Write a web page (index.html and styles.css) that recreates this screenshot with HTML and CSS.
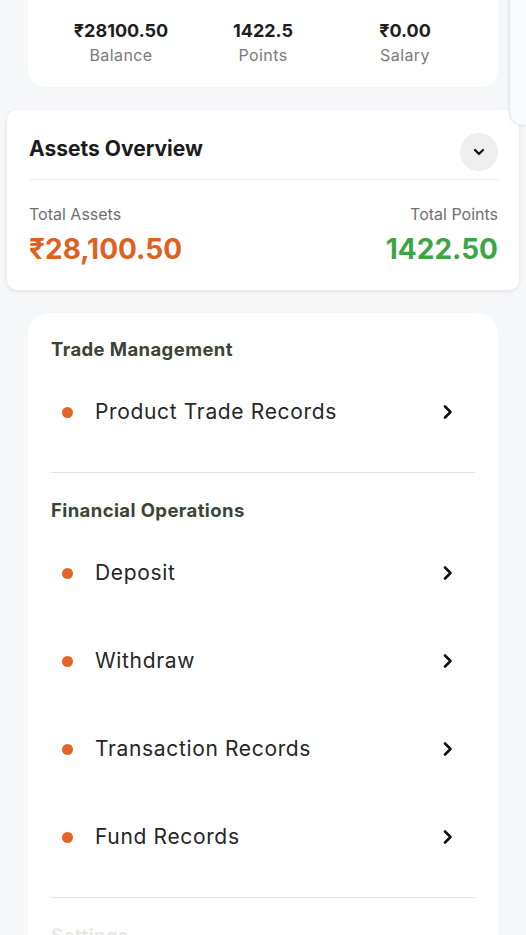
FILE: index.html
```html
<!DOCTYPE html>
<html lang="en">
<head>
<meta charset="utf-8">
<title>Account</title>
<link rel="stylesheet" href="styles.css">
</head>
<body>
<div class="side-peek"></div>
<main class="page">
  <section class="stats-card">
    <div class="stat"><div class="stat-value">₹28100.50</div><div class="stat-label">Balance</div></div>
    <div class="stat"><div class="stat-value">1422.5</div><div class="stat-label">Points</div></div>
    <div class="stat"><div class="stat-value">₹0.00</div><div class="stat-label">Salary</div></div>
  </section>

  <section class="assets-card">
    <div class="assets-head">
      <h2 class="assets-title">Assets Overview</h2>
      <button class="toggle" aria-label="toggle">
        <svg width="12" height="8" viewBox="0 0 12 8"><path d="M2 2l4 4 4-4" fill="none" stroke="#111" stroke-width="2.2" stroke-linecap="round" stroke-linejoin="round"/></svg>
      </button>
    </div>
    <div class="assets-body">
      <div class="asset">
        <div class="asset-label">Total Assets</div>
        <div class="asset-value orange">₹28,100.50</div>
      </div>
      <div class="asset right">
        <div class="asset-label">Total Points</div>
        <div class="asset-value green">1422.50</div>
      </div>
    </div>
  </section>

  <section class="menu-card">
    <h3 class="menu-head">Trade Management</h3>
    <ul class="menu-list">
      <li class="menu-item"><span class="dot"></span><span class="item-text">Product Trade Records</span><svg class="chev" width="12" height="16" viewBox="0 0 12 16"><path d="M3 2.5l5.5 5.5L3 13.5" fill="none" stroke="#111" stroke-width="2.6" stroke-linecap="round" stroke-linejoin="round"/></svg></li>
    </ul>
    <hr class="menu-divider">
    <h3 class="menu-head">Financial Operations</h3>
    <ul class="menu-list">
      <li class="menu-item"><span class="dot"></span><span class="item-text">Deposit</span><svg class="chev" width="12" height="16" viewBox="0 0 12 16"><path d="M3 2.5l5.5 5.5L3 13.5" fill="none" stroke="#111" stroke-width="2.6" stroke-linecap="round" stroke-linejoin="round"/></svg></li>
      <li class="menu-item"><span class="dot"></span><span class="item-text">Withdraw</span><svg class="chev" width="12" height="16" viewBox="0 0 12 16"><path d="M3 2.5l5.5 5.5L3 13.5" fill="none" stroke="#111" stroke-width="2.6" stroke-linecap="round" stroke-linejoin="round"/></svg></li>
      <li class="menu-item"><span class="dot"></span><span class="item-text">Transaction Records</span><svg class="chev" width="12" height="16" viewBox="0 0 12 16"><path d="M3 2.5l5.5 5.5L3 13.5" fill="none" stroke="#111" stroke-width="2.6" stroke-linecap="round" stroke-linejoin="round"/></svg></li>
      <li class="menu-item"><span class="dot"></span><span class="item-text">Fund Records</span><svg class="chev" width="12" height="16" viewBox="0 0 12 16"><path d="M3 2.5l5.5 5.5L3 13.5" fill="none" stroke="#111" stroke-width="2.6" stroke-linecap="round" stroke-linejoin="round"/></svg></li>
    </ul>
    <hr class="menu-divider">
    <h3 class="menu-head faded">Settings</h3>
  </section>
</main>
</body>
</html>
```

FILE: styles.css
```css
* { box-sizing: border-box; }
html, body { margin: 0; padding: 0; }
body {
  background: #f6f7f9;
  font-family: "Inter", "Noto Sans", sans-serif;
  color: #222;
  width: 526px;
  height: 935px;
  overflow: hidden;
  position: relative;
}
.side-peek {
  position: absolute;
  left: 509px;
  top: -20px;
  width: 40px;
  height: 146px;
  background: #f9fafb;
  border: 1px solid #e3e5e8;
  border-radius: 14px;
  box-shadow: -1px 0 3px rgba(0,0,0,0.05);
}
.page {
  display: flex;
  flex-direction: column;
}
.stats-card {
  margin: 0 28px;
  background: #fff;
  border-radius: 0 0 18px 18px;
  height: 87px;
  display: flex;
  padding: 18px 22px 0;
}
.stat {
  flex: 1;
  display: flex;
  flex-direction: column;
  align-items: center;
}
.stat-value {
  font-size: 18px;
  font-weight: 700;
  line-height: 26px;
  color: #1e1e1e;
}
.stat-label {
  font-size: 16px;
  line-height: 22px;
  color: #7a7a7a;
  letter-spacing: 0.4px;
}
.assets-card {
  margin: 23px 7px 0;
  background: #fff;
  border-radius: 10px;
  box-shadow: 0 1px 4px rgba(0,0,0,0.10);
  height: 180px;
  padding: 0 21px 0 22px;
}
.assets-head {
  display: flex;
  justify-content: space-between;
  align-items: center;
  height: 70px;
  border-bottom: 1px solid #ececec;
  padding-top: 14px;
}
.assets-title {
  margin: 0;
  font-size: 21px;
  font-weight: 700;
  color: #1c1c1c;
  margin-top: -6px;
}
.toggle {
  width: 38px;
  height: 38px;
  border-radius: 50%;
  border: none;
  background: #eeeeee;
  display: flex;
  align-items: center;
  justify-content: center;
  padding: 0;
}
.assets-body {
  display: flex;
  justify-content: space-between;
  padding-top: 23px;
}
.asset { display: flex; flex-direction: column; }
.asset.right { align-items: flex-end; }
.asset-label {
  font-size: 16px;
  line-height: 22px;
  color: #6f6f6f;
}
.asset-value {
  font-size: 28px;
  font-weight: 700;
  line-height: 36px;
  margin-top: 6px;
}
.orange { color: #e0611f; }
.green { color: #3ea547; }
.menu-card {
  margin: 23px 28px 0;
  background: #fff;
  border-radius: 22px;
  padding: 24px 23px 0;
  height: 700px;
}
.menu-head {
  margin: 0;
  font-size: 18.5px;
  font-weight: 700;
  line-height: 24px;
  letter-spacing: 0.4px;
  color: #3a4535;
}
.menu-head.faded { color: #e6e8e6; margin-top: 4px; }
.menu-list {
  list-style: none;
  margin: 7px 0 0;
  padding: 0;
}
.menu-item {
  height: 88px;
  display: flex;
  align-items: center;
  padding-left: 11px;
}
.dot {
  width: 11px;
  height: 11px;
  border-radius: 50%;
  background: #e4652a;
  flex: none;
}
.item-text {
  margin-left: 22px;
  font-size: 21px;
  color: #262626;
  letter-spacing: 0.65px;
  flex: 1;
  margin-top: -2px;
}
.chev { margin-right: 21px; flex: none; }
.menu-divider {
  border: none;
  border-top: 1.5px solid #e6e6e6;
  margin: 16px 0 25px;
}
```
